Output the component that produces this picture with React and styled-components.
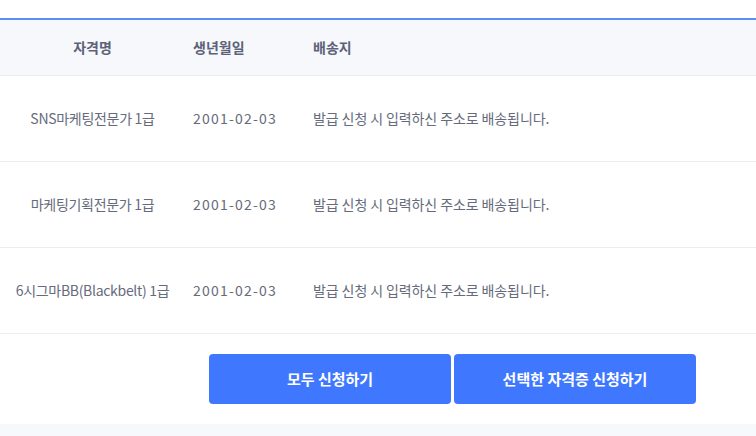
import styled, { createGlobalStyle } from 'styled-components'

const GlobalStyle = createGlobalStyle`
    * {
        box-sizing: border-box;
        margin: 0;
        padding: 0;
    }
    body {
        margin: 0;
        background-color: #FFFFFF;
        font-family: "Noto Sans CJK KR", "Noto Sans", sans-serif;
    }
`;

const rows = [
    { name: 'SNS마케팅전문가 1급', birth: '2001-02-03' },
    { name: '마케팅기획전문가 1급', birth: '2001-02-03' },
    { name: '6시그마BB(Blackbelt) 1급', birth: '2001-02-03' },
];

export default function App() {
    return (
        <>
            <GlobalStyle />
            <Page>
                <Table>
                    <thead>
                        <HeadRow>
                            <Th $center>자격명</Th>
                            <Th>생년월일</Th>
                            <Th>배송지</Th>
                        </HeadRow>
                    </thead>
                    <tbody>
                        {rows.map((row) => (
                            <Row key={row.name}>
                                <Td $center>{row.name}</Td>
                                <Td $spacing="1.2px">{row.birth}</Td>
                                <Td $spacing="-0.1px">발급 신청 시 입력하신 주소로 배송됩니다.</Td>
                            </Row>
                        ))}
                    </tbody>
                </Table>
                <Actions>
                    <Button>모두 신청하기</Button>
                    <Button>선택한 자격증 신청하기</Button>
                </Actions>
                <Bottom />
            </Page>
        </>
    )
}

const Page = styled.div`
    width: 756px;
    height: 436px;
    padding-top: 18px;
    display: flex;
    flex-direction: column;
`;

const Table = styled.table`
    width: 100%;
    border-collapse: collapse;
    table-layout: fixed;
    border-top: 1px solid #E8E9EE;
`;

const HeadRow = styled.tr`
    height: 56px;
    background-color: #F7F8FC;
    border-top: 2px solid #5B8DF6;
    border-bottom: 1px solid #ECEDF0;
    th:nth-child(1) { width: 185px; }
    th:nth-child(2) { width: 120px; }
`;

const Th = styled.th`
    padding: 0 8px;
    font-size: 14px;
    font-weight: 700;
    color: #5C6378;
    text-align: ${(p) => (p.$center ? 'center' : 'left')};
`;

const Row = styled.tr`
    height: 86px;
    border-bottom: 1px solid #ECEDF0;
`;

const Td = styled.td`
    padding: 0 8px;
    font-size: 14px;
    font-weight: 400;
    letter-spacing: ${(p) => p.$spacing || '-0.3px'};
    color: #666B7C;
    white-space: nowrap;
    text-align: ${(p) => (p.$center ? 'center' : 'left')};
`;

const Actions = styled.div`
    display: flex;
    gap: 3px;
    padding: 20px 0 20px 209px;
`;

const Button = styled.button`
    width: 242px;
    height: 50px;
    border: none;
    border-radius: 4px;
    background-color: #3F78FF;
    color: #FFFFFF;
    font-family: inherit;
    font-size: 15px;
    font-weight: 700;
    cursor: pointer;
`;

const Bottom = styled.div`
    flex: 1;
    background-color: #F7F8FC;
`;
